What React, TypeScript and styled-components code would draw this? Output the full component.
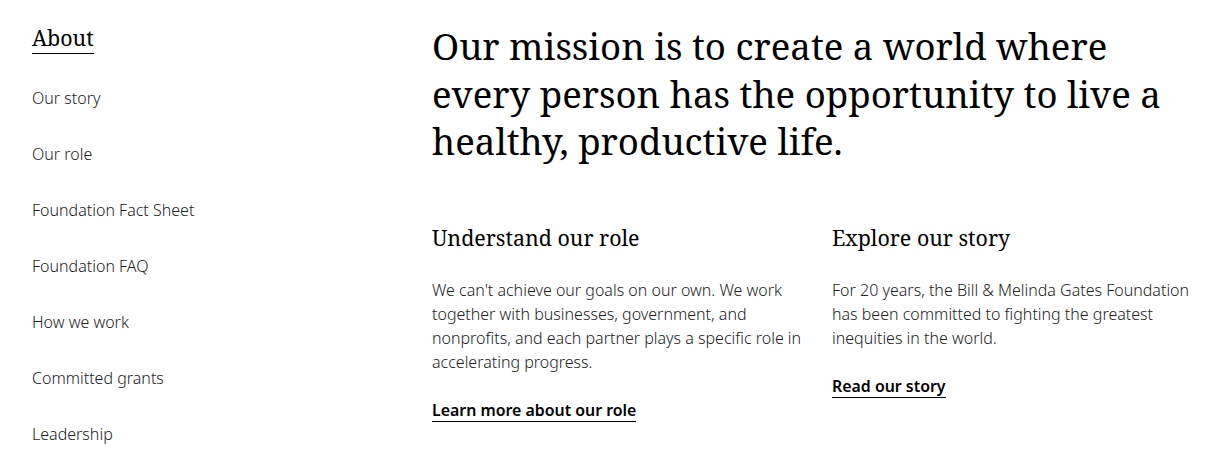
import styled, { createGlobalStyle } from "styled-components";

const GlobalStyle = createGlobalStyle`
  html, body {
    margin: 0;
    padding: 0;
    background: #fff;
  }
  body {
    font-family: "Noto Sans", "Open Sans", sans-serif;
    color: #222;
  }
`;

const serif = `"Noto Serif", "DejaVu Serif", "Liberation Serif", serif`;

const Page = styled.div`
  display: flex;
  padding: 23px 0 0 32px;
  width: 1223px;
  height: 471px;
  box-sizing: border-box;
  overflow: hidden;
`;

const SideNav = styled.nav`
  width: 400px;
  flex-shrink: 0;
  display: flex;
  flex-direction: column;
`;

const NavTitle = styled.a`
  font-family: ${serif};
  font-size: 21.4px;
  font-weight: 400;
  line-height: 30px;
  color: #000;
  text-decoration: none;
  border-bottom: 1.5px solid #000;
  align-self: flex-start;
  margin-bottom: 32px;
`;

const NavList = styled.ul`
  list-style: none;
  margin: 0;
  padding: 0;
  display: flex;
  flex-direction: column;
  gap: 32px;
`;

const NavItem = styled.li`
  font-size: 16px;
  line-height: 24px;
  font-weight: 300;
  color: #222;
`;

const Main = styled.main`
  flex: 1;
  display: flex;
  flex-direction: column;
`;

const Mission = styled.h1`
  font-family: ${serif};
  font-weight: 400;
  font-size: 36.6px;
  line-height: 47.5px;
  color: #000;
  max-width: 760px;
  margin: 0 0 57px;
`;

const Columns = styled.div`
  display: flex;
  gap: 16px;
`;

const Column = styled.section`
  width: 384px;
  display: flex;
  flex-direction: column;
  align-items: flex-start;
`;

const ColTitle = styled.h2`
  font-family: ${serif};
  font-weight: 400;
  font-size: 21.4px;
  line-height: 30px;
  color: #000;
  margin: 0 0 25px;
`;

const Para = styled.p`
  font-size: 16px;
  line-height: 24px;
  font-weight: 300;
  color: #222;
  margin: 0 0 25px;
`;

const MoreLink = styled.a`
  font-size: 15.9px;
  line-height: 22px;
  font-weight: 600;
  color: #000;
  text-decoration: none;
  border-bottom: 1.5px solid #000;
`;

const navItems = [
  "Our story",
  "Our role",
  "Foundation Fact Sheet",
  "Foundation FAQ",
  "How we work",
  "Committed grants",
  "Leadership",
];

export default function App() {
  return (
    <>
      <GlobalStyle />
      <Page>
        <SideNav>
          <NavTitle href="#">About</NavTitle>
          <NavList>
            {navItems.map((item) => (
              <NavItem key={item}>{item}</NavItem>
            ))}
          </NavList>
        </SideNav>

        <Main>
          <Mission>
            Our mission is to create a world where every person has the
            opportunity to live a healthy, productive life.
          </Mission>

          <Columns>
            <Column>
              <ColTitle>Understand our role</ColTitle>
              <Para>
                We can't achieve our goals on our own. We work together with
                businesses, government, and nonprofits, and each partner plays a
                specific role in accelerating progress.
              </Para>
              <MoreLink href="#">Learn more about our role</MoreLink>
            </Column>
            <Column>
              <ColTitle>Explore our story</ColTitle>
              <Para>
                For 20 years, the Bill &amp; Melinda Gates Foundation has been
                committed to fighting the greatest inequities in the world.
              </Para>
              <MoreLink href="#">Read our story</MoreLink>
            </Column>
          </Columns>
        </Main>
      </Page>
    </>
  );
}
